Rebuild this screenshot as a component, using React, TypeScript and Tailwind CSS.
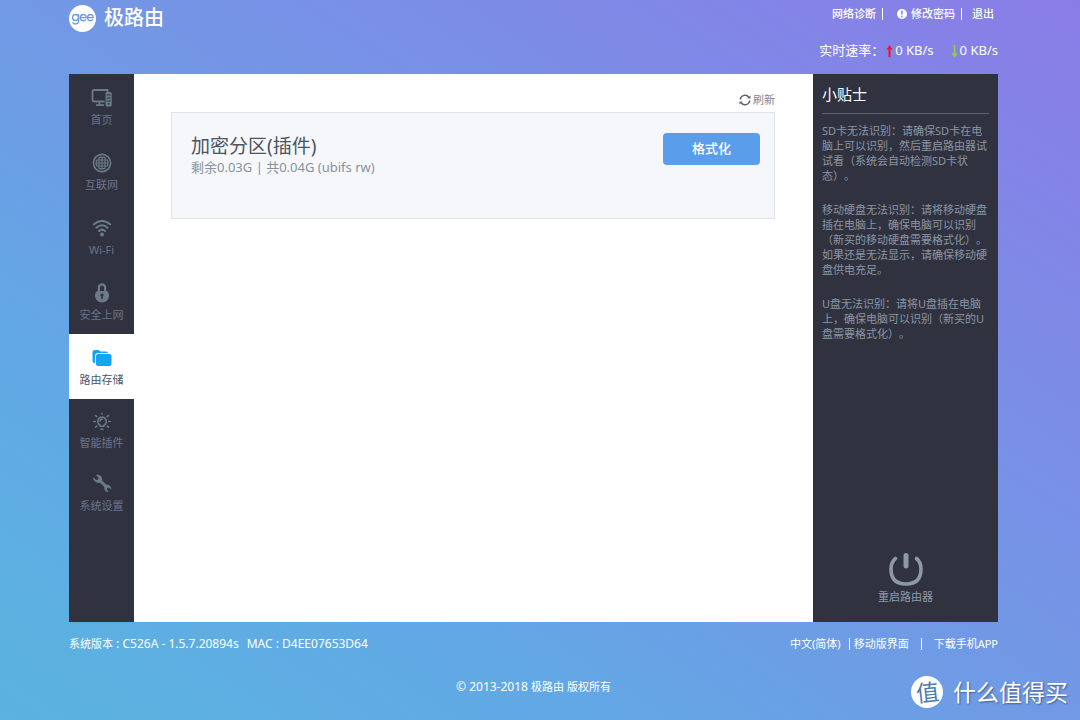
import type { ReactNode } from 'react';

function ComputerIcon() {
  return (
    <svg width="22" height="20" viewBox="0 0 22 20" fill="none" stroke="currentColor" strokeWidth="1.8">
      <path d="M13.500 2H3a1.500 1.500 0 0 0-1.500 1.500v8.500A1.500 1.500 0 0 0 3 13.500h10.500" />
      <path d="M13 2h3.500v2M8.500 13.500v3.500M5 17.200h8" />
      <rect x="14.500" y="4" width="6.200" height="14.500" rx="1.500" fill="currentColor" stroke="none" />
      <path d="M15.500 7h4.200M15.500 10h4.200M15.500 13h4.200" stroke="#30333f" strokeWidth="1" />
      <circle cx="17.600" cy="15.800" r="0.900" fill="#30333f" stroke="none" />
    </svg>
  );
}

function GlobeIcon() {
  return (
    <svg width="20" height="20" viewBox="0 0 20 20" fill="none" stroke="currentColor" strokeWidth="1.200">
      <circle cx="10" cy="10" r="8.600" strokeWidth="1.600" />
      <path d="M10 3.500v13M7 4.200v11.600M13 4.200v11.600M4.300 7v6M15.700 7v6M3.500 10h13M4.200 7h11.600M4.200 13h11.600M7 4.300h6M7 15.700h6" />
    </svg>
  );
}

function WifiIcon() {
  return (
    <svg width="20" height="20" viewBox="0 0 20 20" fill="none" stroke="currentColor" strokeWidth="2" strokeLinecap="round">
      <path d="M1.800 6.300Q10-.6 18.200 6.300M4.400 9.700Q10 4.800 15.600 9.700M7 13Q10 10.200 13 13" />
      <circle cx="10" cy="16.500" r="2" fill="currentColor" stroke="none" />
    </svg>
  );
}

function LockIcon() {
  return (
    <svg width="16" height="20" viewBox="0 0 16 20" fill="none">
      <path d="M4.900 8.500V4.500a3.100 3.100 0 0 1 6.200 0v4" stroke="currentColor" strokeWidth="2.200" />
      <path d="M3 8h10c1.500 1.400 2 3 2 4.600C15 16.600 12 19.500 8 19.500s-7-2.900-7-6.900C1 11 1.500 9.400 3 8z" fill="currentColor" />
      <circle cx="8" cy="12" r="1.600" fill="#30333f" />
      <path d="M7.200 12h1.600v4.200H7.200z" fill="#30333f" />
    </svg>
  );
}

function FolderIcon() {
  return (
    <svg width="20" height="20" viewBox="0 0 20 20" className="text-[#12a5f4]">
      <path d="M.5 13V4A2 2 0 0 1 2.500 2h4l2 1.500h5.500a2 2 0 0 1 2 1.500H6.200A3.200 3.200 0 0 0 3 8.200V15H2.500a2 2 0 0 1-2-2z" fill="currentColor" />
      <rect x="4" y="6" width="15.500" height="12" rx="2" fill="currentColor" />
    </svg>
  );
}

function BulbIcon() {
  return (
    <svg width="20" height="20" viewBox="0 0 20 20" fill="none" stroke="currentColor" strokeWidth="1.600" strokeLinecap="round">
      <path d="M8.200 14.300a4.300 4.300 0 1 1 3.600 0v.9H8.200zM8 10a2.200 2.200 0 0 1 2-1.900" />
      <path d="M9 18.200h2M10 2.600v.2M3.600 4.600l1.200 1M16.400 4.600l-1.200 1M1.800 10.500h1.500M16.700 10.500h1.500M3.600 16.200l1.200-1M16.400 16.200l-1.200-1" />
    </svg>
  );
}

function WrenchIcon() {
  return (
    <svg width="20" height="20" viewBox="0 0 20 20" fill="currentColor">
      <path d="M1.200 3.300l3 2.800 1.900-.5.500-1.900L3.900 1C6 .3 8 .9 9.200 2.400c1 1.300 1.200 2.700.8 4.100l4.200 4.300c1.500-.3 2.900.1 3.900 1.200.9 1 1.200 2.300.9 3.500l-2.100-1.900-1.700.4-.4 1.700 2 2.100c-1.300.3-2.600-.1-3.500-1.100-.9-1.100-1.200-2.400-.9-3.700L8 8.700c-1.600.5-3.300.2-4.600-.9C1.700 6.700.8 5 1.200 3.300z" />
    </svg>
  );
}

function RefreshIcon() {
  return (
    <svg width="12" height="12" viewBox="0 0 12 12" fill="none" stroke="currentColor" strokeWidth="1.500" className="text-[#5c6470]">
      <path d="M1.300 5.500A4.700 4.700 0 0 1 9.800 3.200M10.700 6.500A4.700 4.700 0 0 1 2.200 8.800" />
      <path d="M8.200 4.500h3.300V1.600zM3.800 7.500H.5v2.900z" fill="currentColor" stroke="none" />
    </svg>
  );
}

function AlertIcon() {
  return (
    <svg width="10" height="10" viewBox="0 0 10 10">
      <circle cx="5" cy="5" r="5" fill="#fff" />
      <path d="M4.100 1.700h1.800l-.3 4H4.400zM4.200 6.700h1.600v1.600H4.200z" fill="#7f84e6" />
    </svg>
  );
}

function PowerIcon() {
  return (
    <svg width="36" height="36" viewBox="0 0 36 36" fill="none" stroke="#8d9aa4" strokeLinecap="round">
      <path d="M7.500 7.500C5 9.500 3 13 3 18c0 10 5.500 15 15 15s15-5 15-15c0-5-2-8.500-4.500-10.500" strokeWidth="3.600" />
      <path d="M18 4.500V15" strokeWidth="5" />
    </svg>
  );
}

type Item = { label: string; icon: ReactNode; box: string };

const upper = 'h-[65px] pt-3.5 text-[#6b7c88]';
const lower = 'h-[63px] pt-3 text-[#6b7c88]';
const active = 'h-[65px] bg-white pt-3.5';

const items: Item[] = [
  { label: '首页', icon: <ComputerIcon />, box: upper },
  { label: '互联网', icon: <GlobeIcon />, box: upper },
  { label: 'Wi-Fi', icon: <WifiIcon />, box: upper },
  { label: '安全上网', icon: <LockIcon />, box: upper },
  { label: '路由存储', icon: <FolderIcon />, box: active },
  { label: '智能插件', icon: <BulbIcon />, box: lower },
  { label: '系统设置', icon: <WrenchIcon />, box: lower },
];

const tips = [
  'SD卡无法识别：请确保SD卡在电脑上可以识别，然后重启路由器试试看（系统会自动检测SD卡状态）。',
  '移动硬盘无法识别：请将移动硬盘插在电脑上，确保电脑可以识别（新买的移动硬盘需要格式化）。如果还是无法显示，请确保移动硬盘供电充足。',
  'U盘无法识别：请将U盘插在电脑上，确保电脑可以识别（新买的U盘需要格式化）。',
];

function Header() {
  return (
    <header className="flex h-[74px] justify-between">
      <a href="#home" className="flex h-9 items-center gap-2">
        <svg width="27" height="27" viewBox="0 0 27 27" fill="none" stroke="#6d9ce6" strokeWidth="1.300">
          <circle cx="13.500" cy="13.500" r="13.500" fill="#fff" stroke="none" />
          <circle cx="6.500" cy="12.500" r="3" />
          <path d="M9.600 9.300v7c0 3.400-5.200 3.400-5.900.9M11.300 12.700h6c0-4.500-6-4.100-6 .1 0 3.500 4.200 3.700 5.600 1.600M18.600 12.700h5.600c0-4.500-5.600-4.100-5.600.1 0 3.500 3.800 3.700 5.200 1.600" />
        </svg>
        <span className="text-xl leading-7 font-medium">极路由</span>
      </a>
      <div className="flex flex-col items-end">
        <nav className="flex h-7 items-center pr-1 text-[11px] font-medium">
          <a href="#diagnose">网络诊断</a>
          <span className="mx-1.5 h-3 w-px bg-white" />
          <a href="#password" className="ml-2 flex items-center gap-1">
            <AlertIcon />
            修改密码
          </a>
          <span className="mr-2.5 ml-1.5 h-3 w-px bg-white" />
          <a href="#logout">退出</a>
        </nav>
        <div className="mt-3 flex h-[22px] items-center text-[13px]">
          <span className="mr-0.5">实时速率：</span>
          <svg width="7" height="13" viewBox="0 0 7 13" className="mr-0.5">
            <path d="M3.500 0L6.500 4.500H4.500V12h-2V4.500H.5z" fill="#f8101c" />
          </svg>
          <span>0 KB/s</span>
          <svg width="7" height="13" viewBox="0 0 7 13" className="mr-0.5 ml-[17px]">
            <path d="M3.500 12.500L6.500 8.500H4.300V0H2.700v8.500H.5z" fill="#94d13d" />
          </svg>
          <span>0 KB/s</span>
        </div>
      </div>
    </header>
  );
}

function Sidebar() {
  return (
    <nav className="w-[65px] shrink-0 bg-[#30333f]">
      {items.map((item) => (
        <a key={item.label} href="#menu" className={`flex flex-col items-center ${item.box}`}>
          {item.icon}
          <span
            className={
              item.box === active
                ? 'mt-1 text-[11px] leading-4 text-[#4d5566]'
                : 'mt-1 text-[11px] leading-4 text-[#6b738c]'
            }
          >
            {item.label}
          </span>
        </a>
      ))}
    </nav>
  );
}

export default function App() {
  return (
    <div className="relative flex min-h-screen flex-col bg-[linear-gradient(to_top_right,#5ab4df,#61a9e5_25%,#7199e5_50%,#8a7ce7)] pr-[82px] pl-[69px] font-['Noto_Sans','Noto_Sans_CJK_SC',sans-serif] text-white">
      <Header />
      <div className="flex flex-1">
        <Sidebar />
        <main className="flex-1 bg-white pt-4 pr-[38px] pl-[37px]">
          <div className="flex h-[22px] items-start justify-end pt-0.5">
            <button type="button" className="flex items-center gap-0.5 text-[11px] text-[#7b8794]">
              <RefreshIcon />
              刷新
            </button>
          </div>
          <section className="flex h-[107px] items-start justify-between border border-[#e0e3e9] bg-[#f5f7fb] pt-5 pr-3.5 pl-[19px]">
            <div>
              <h1 className="text-[19px] leading-[26px] text-[#4b545f]">加密分区(插件)</h1>
              <p className="text-[13px] leading-4 text-[#87929b]">剩余0.03G | 共0.04G (ubifs rw)</p>
            </div>
            <button type="button" className="h-8 w-[97px] rounded bg-[#5a9eeb] text-[13px] font-medium">
              格式化
            </button>
          </section>
        </main>
        <aside className="flex w-[185px] shrink-0 flex-col justify-between bg-[#30333f] px-[9px] pb-[17px]">
          <div>
            <h2 className="border-b border-[#5c616e] pt-2 pb-[7px] text-[15px] leading-6">小贴士</h2>
            <div className="mt-[9px] flex flex-col gap-[19px] text-[11px] leading-[15px] text-[#8b95a5] [text-spacing-trim:space-all]">
              {tips.map((tip) => (
                <p key={tip}>{tip}</p>
              ))}
            </div>
          </div>
          <button type="button" className="flex flex-col items-center gap-0.5 self-center text-[11px] leading-4 text-[#8f9bb0]">
            <PowerIcon />
            重启路由器
          </button>
        </aside>
      </div>
      <footer className="h-[98px] pt-3.5 text-[11px] leading-4">
        <div className="flex justify-between">
          <div className="flex gap-2 text-xs leading-4">
            <span>
              <span className="text-[11px]">系统版本</span> : C526A - 1.5.7.20894s
            </span>
            <span>MAC : D4EE07653D64</span>
          </div>
          <nav className="flex items-center">
            <a href="#lang">中文(简体)</a>
            <span className="mr-1 ml-2 h-3 w-px bg-white" />
            <a href="#mobile">移动版界面</a>
            <span className="mx-3 h-3 w-px bg-white" />
            <a href="#app">下载手机APP</a>
          </nav>
        </div>
        <p className="mt-[27px] text-center text-xs leading-4">
          © 2013-2018 <span className="text-[11px]">极路由 版权所有</span>
        </p>
      </footer>
      <div className="absolute right-3 bottom-3 flex items-center gap-2.5 [text-shadow:1px_1px_2px_#00000066]">
        <span className="flex size-8 items-center justify-center rounded-full bg-white text-[23px] leading-8 text-[#4f7ab5] [text-shadow:none]">
          <span className="-rotate-6">值</span>
        </span>
        <span className="text-[23px] leading-8">什么值得买</span>
      </div>
    </div>
  );
}
